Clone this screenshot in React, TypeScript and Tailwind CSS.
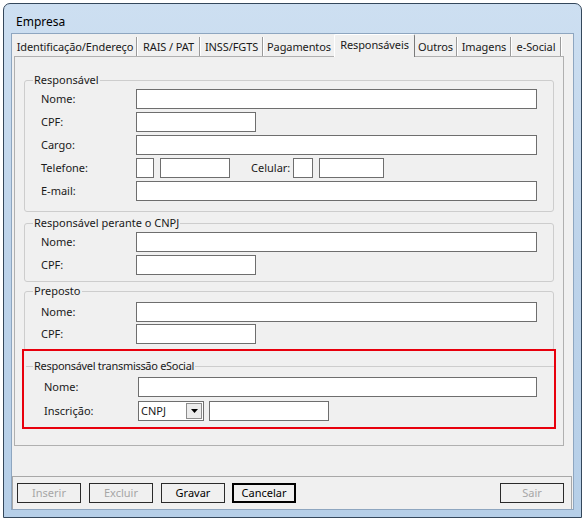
import React from 'react';

type Tab = { label: string; w: string; sep: boolean; active?: boolean };

const tabs: Tab[] = [
  { label: 'Identificação/Endereço', w: 'w-[124px]', sep: true },
  { label: 'RAIS / PAT', w: 'w-[63px]', sep: true },
  { label: 'INSS/FGTS', w: 'w-[63px]', sep: true },
  { label: 'Pagamentos', w: 'w-[70px]', sep: false },
  { label: 'Responsáveis', w: 'w-[81px]', sep: false, active: true },
  { label: 'Outros', w: 'w-[43px]', sep: true },
  { label: 'Imagens', w: 'w-[54px]', sep: true },
  { label: 'e-Social', w: 'w-[50px]', sep: true },
];

function Box({ className = '' }: { className?: string }) {
  return <div className={`h-[20px] border border-[#6e6e6e] bg-white ${className}`} />;
}

function Row({ label, children, labelW = 'w-[95px]' }: { label: string; children: React.ReactNode; labelW?: string }) {
  return (
    <div className="flex items-center h-[20px]">
      <span className={`${labelW} shrink-0`}>{label}</span>
      {children}
    </div>
  );
}

function Group({ title, className = '', children }: { title: string; className?: string; children: React.ReactNode }) {
  return (
    <fieldset className={`border border-[#cdcdcd] rounded-[3px] ${className}`}>
      <legend className="ml-[8px] px-[1px] leading-[14px]">{title}</legend>
      {children}
    </fieldset>
  );
}

function Button({ label, disabled, primary }: { label: string; disabled?: boolean; primary?: boolean }) {
  return (
    <div
      className={`w-[64px] h-[20px] flex items-center justify-center bg-[#f0f0f0] ${
        primary ? 'border-2 border-black' : 'border border-[#2a2a2a]'
      } ${disabled ? 'text-[#a6a6a6]' : 'text-black'}`}
    >
      {label}
    </div>
  );
}

export default function App() {
  return (
    <div className="w-[585px] h-[524px] bg-white pl-[3px] pt-[3px] font-['Noto_Sans',sans-serif] text-[11px] text-[#1a1a1a]">
      <div className="w-[579px] h-[515px] rounded-t-[7px] border border-[#34475b] bg-gradient-to-b from-[#cddff1] via-[#bdd3ea] to-[#b6cfe8] flex flex-col px-[7px] pb-[7px]">
        {/* title bar */}
        <div className="h-[29px] shrink-0 pl-[5px] pt-[10px] text-[12px] leading-[15px] text-black">Empresa</div>

        {/* client */}
        <div className="flex-1 bg-[#f0f0f0] border border-[#8ea6c0] flex flex-col">
          {/* tabs */}
          <div className="h-[22px] shrink-0 flex items-end pl-[2px] tracking-[-0.1px]">
            {tabs.map((t) =>
              t.active ? (
                <div
                  key={t.label}
                  className={`${t.w} h-[23px] -mb-px relative z-10 bg-[#f0f0f0] border-l border-t border-white border-r border-r-[#7a7a7a] rounded-t-[2px] flex justify-center pt-[3px] leading-[14px]`}
                >
                  {t.label}
                </div>
              ) : (
                <div key={t.label} className={`${t.w} h-[19px] flex items-center`}>
                  <span className="flex-1 text-center leading-[14px]">{t.label}</span>
                  {t.sep && <span className="h-[19px] w-[2px] border-l border-[#9a9a9a] border-r border-r-white" />}
                </div>
              ),
            )}
          </div>

          {/* tab sheet */}
          <div className="ml-[2px] w-[550px] h-[390px] shrink-0 border border-[#b0b0b0] pt-[16px] px-[9px] flex flex-col">
            <Group title="Responsável">
              <div className="pl-[16px] pr-[16px] pt-[2px] pb-[10px] flex flex-col gap-[3px]">
                <Row label="Nome:"><Box className="flex-1" /></Row>
                <Row label="CPF:"><Box className="w-[120px]" /></Row>
                <Row label="Cargo:"><Box className="flex-1" /></Row>
                <Row label="Telefone:">
                  <Box className="w-[18px]" />
                  <Box className="w-[70px] ml-[6px]" />
                  <span className="ml-[21px] w-[42px]">Celular:</span>
                  <Box className="w-[20px]" />
                  <Box className="w-[65px] ml-[6px]" />
                </Row>
                <Row label="E-mail:"><Box className="flex-1" /></Row>
              </div>
            </Group>

            <Group title="Responsável perante o CNPJ" className="mt-[4px]">
              <div className="pl-[16px] pr-[16px] pt-[2px] pb-[6px] flex flex-col gap-[3px]">
                <Row label="Nome:"><Box className="flex-1" /></Row>
                <Row label="CPF:"><Box className="w-[120px]" /></Row>
              </div>
            </Group>

            <Group title="Preposto" className="mt-[2px]">
              <div className="pl-[16px] pr-[16px] pt-[4px] pb-[6px] flex flex-col gap-[2px]">
                <Row label="Nome:"><Box className="flex-1" /></Row>
                <Row label="CPF:"><Box className="w-[120px]" /></Row>
              </div>
            </Group>

            {/* highlighted group */}
            <div className="-mt-[2px] -mx-[2px] relative border-2 border-[#e8000d]">
              <fieldset className="ml-[2px] mt-[8px] border-t border-[#cdcdcd]">
                <legend className="ml-[7px] px-[1px] leading-[14px] tracking-[-0.3px]">Responsável transmissão eSocial</legend>
                <div className="pl-[18px] pr-[17px] pt-[4px] pb-[6px] flex flex-col gap-[4px]">
                  <Row label="Nome:" labelW="w-[94px]"><Box className="flex-1" /></Row>
                  <Row label="Inscrição:" labelW="w-[94px]">
                    <div className="w-[66px] h-[20px] border border-[#6e6e6e] bg-white flex items-center pl-[2px] pr-[1px]">
                      <span className="flex-1">CNPJ</span>
                      <span className="w-[16px] h-[16px] border border-[#8c8c8c] bg-[#ececec] flex items-center justify-center">
                        <svg width="7" height="4" viewBox="0 0 7 4">
                          <path d="M0 0h7L3.5 4z" fill="#000" />
                        </svg>
                      </span>
                    </div>
                    <Box className="w-[120px] ml-[5px]" />
                  </Row>
                </div>
              </fieldset>
            </div>
          </div>

          <div className="flex-1" />

          {/* button bar */}
          <div className="h-[33px] shrink-0 mr-[1px] border border-b-0 border-[#a8a8a8] flex items-start pt-[6px] pl-[4px] pr-[7px] gap-[8px]">
            <Button label="Inserir" disabled />
            <Button label="Excluir" disabled />
            <Button label="Gravar" />
            <div className="-ml-[1px]">
              <Button label="Cancelar" primary />
            </div>
            <div className="ml-auto">
              <Button label="Sair" disabled />
            </div>
          </div>
        </div>
      </div>
    </div>
  );
}
